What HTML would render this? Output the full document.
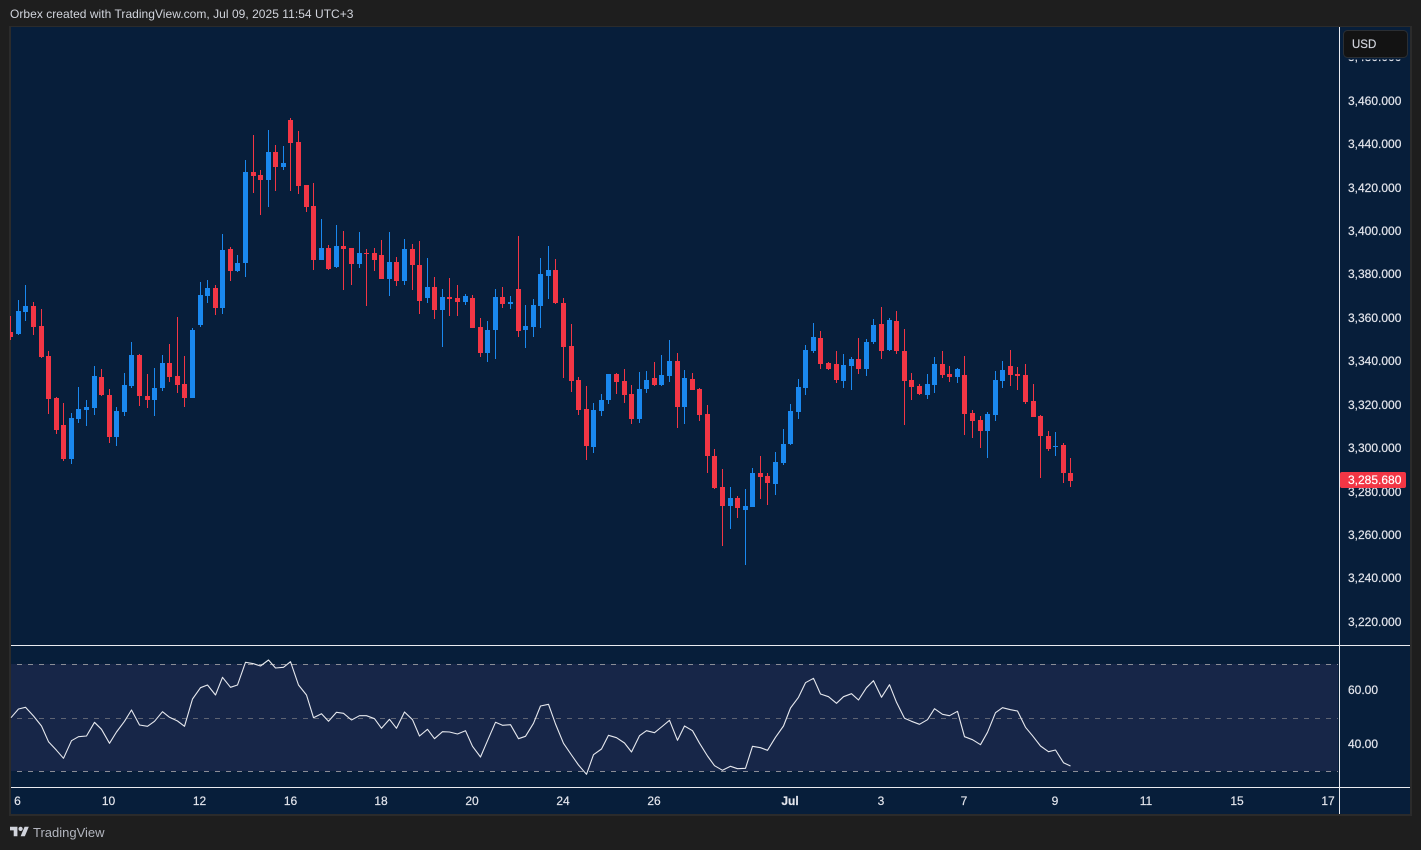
<!DOCTYPE html>
<html>
<head>
<meta charset="utf-8">
<title>Orbex chart</title>
<style>
html,body{margin:0;padding:0;background:#1e1e1e;width:1421px;height:850px;overflow:hidden}
svg{display:block;position:absolute;left:0;top:0}
text{font-family:"Liberation Sans",sans-serif;font-size:12px;fill:#e3e5ec;stroke:#e3e5ec;stroke-width:.18px}
</style>
</head>
<body>
<svg width="1421" height="850" viewBox="0 0 1421 850" xmlns="http://www.w3.org/2000/svg">
<rect width="1421" height="850" fill="#1e1e1e"/>
<text x="10" y="18" style="fill:#d1d4dc;stroke:none;letter-spacing:.035px">Orbex created with TradingView.com, Jul 09, 2025 11:54 UTC+3</text>

<!-- frame -->
<rect x="9" y="26" width="1403" height="790" fill="#2b2b2b"/>
<rect x="11" y="27" width="1399" height="787" fill="#071e3a"/>

<!-- RSI band -->
<rect x="11" y="664" width="1327" height="107" fill="#172648"/>
<g stroke="#8a8d96" stroke-width="1" stroke-dasharray="5 6" fill="none">
<path d="M17 664.5H1338"/>
<path d="M17 718.5H1338" stroke="#5f6473"/>
<path d="M17 771.5H1338"/>
</g>

<!-- wicks -->
<g fill="none" stroke-width="1" shape-rendering="crispEdges">
<path stroke="#f23645" d="M10.5 316V340M33.5 302V335M41.5 309V358M48.5 351V414M56.5 397V434M63.5 403V461M101.5 369V396M109.5 389V443M139.5 354V406M147.5 374V408M169.5 344V382M177.5 317V393M184.5 356V407M215.5 285V315M230.5 247V281M253.5 135V193M260.5 170V215M275.5 145V191M290.5 118V191M298.5 131V194M306.5 185V212M313.5 183V270M328.5 245V270M343.5 231V290M351.5 248V285M366.5 249V306M374.5 248V271M381.5 240V279M396.5 257V286M412.5 244V290M419.5 241V314M434.5 277V319M449.5 278V316M457.5 285V316M472.5 295V328M480.5 318V357M502.5 287V308M518.5 236V337M555.5 259V304M563.5 298V378M571.5 324V392M578.5 377V415M586.5 386V460M616.5 373V394M624.5 369V403M631.5 385V424M654.5 362V386M677.5 353V428M692.5 373V390M699.5 388V421M707.5 405V473M714.5 449V489M722.5 469V546M737.5 496V518M760.5 456V499M767.5 473V505M820.5 331V369M828.5 362V370M836.5 351V383M858.5 338V374M881.5 307V359M896.5 311V354M904.5 329V425M911.5 373V400M919.5 384V395M942.5 351V378M949.5 366V382M964.5 356V435M972.5 410V438M980.5 416V448M1010.5 350V386M1017.5 367V390M1025.5 364V404M1033.5 384V417M1040.5 415V478M1048.5 431V451M1063.5 443V483M1070.5 458V487"/>
<path stroke="#1a88ee" d="M18.5 300V335M25.5 285V321M71.5 413V464M78.5 387V423M86.5 400V426M94.5 366V415M116.5 407V446M124.5 373V416M131.5 342V388M154.5 368V416M162.5 355V391M192.5 328V398M200.5 282V327M207.5 280V303M222.5 234V314M237.5 255V272M245.5 160V277M268.5 130V207M283.5 146V170M321.5 219V260M336.5 225V268M359.5 232V268M389.5 232V296M404.5 239V285M427.5 258V303M442.5 289V347M465.5 294V305M487.5 321V362M495.5 289V359M510.5 296V309M525.5 305V348M533.5 299V337M540.5 258V328M548.5 246V299M593.5 403V453M601.5 394V416M608.5 374V404M639.5 372V423M646.5 371V393M661.5 355V386M669.5 340V382M684.5 370V424M730.5 487V529M745.5 489V565M752.5 468V507M775.5 452V495M783.5 429V465M790.5 404V445M798.5 379V419M805.5 345V395M813.5 323V353M843.5 354V388M851.5 357V390M866.5 339V376M873.5 319V344M889.5 318V351M927.5 374V399M934.5 357V393M957.5 368V383M987.5 412V458M995.5 371V421M1002.5 361V388M1055.5 432V456"/>
</g>
<!-- bodies -->
<g fill="none" stroke-width="5" shape-rendering="crispEdges">
<path stroke="#f23645" d="M33.5 306V327M41.5 326V357M48.5 356V399M56.5 398V430M63.5 425V459M101.5 377V395M109.5 395V437M139.5 355V396M147.5 396V400M169.5 363V377M177.5 376V385M184.5 384V398M215.5 288V308M230.5 249V271M253.5 172V176M260.5 175V180M275.5 152V167M290.5 120V143M298.5 142V186M306.5 185V207M313.5 206V260M328.5 248V269M343.5 246V249M351.5 248V264M366.5 253V254M374.5 253V260M381.5 255V279M396.5 262V281M412.5 249V265M419.5 265V301M434.5 287V310M449.5 297V299M457.5 298V302M472.5 298V328M480.5 327V353M502.5 297V304M518.5 289V331M555.5 270V303M563.5 303V347M571.5 346V381M578.5 380V410M586.5 409V446M616.5 374V382M624.5 381V395M631.5 394V419M654.5 378V385M677.5 361V407M692.5 379V390M699.5 389V415M707.5 414V456M714.5 456V488M722.5 487V506M737.5 498V508M760.5 473V477M767.5 476V483M820.5 338V364M828.5 363V369M836.5 364V380M858.5 359V369M881.5 324V351M896.5 321V351M904.5 351V381M911.5 380V387M919.5 386V394M942.5 364V375M949.5 374V377M964.5 375V414M972.5 413V421M980.5 420V431M1010.5 366V375M1017.5 374V376M1025.5 375V402M1033.5 401V417M1040.5 416V436M1048.5 436V449M1063.5 445V473M1070.5 473V481"/>
<path stroke="#1a88ee" d="M18.5 311V334M25.5 306V312M71.5 418V459M78.5 409V419M86.5 407V410M94.5 376V408M116.5 411V437M124.5 385V412M131.5 355V386M154.5 388V400M162.5 363V388M192.5 330V398M200.5 295V325M207.5 288V296M222.5 250V308M237.5 263V271M245.5 172V263M268.5 152V180M283.5 163V167M321.5 248V260M336.5 246V267M359.5 253V264M389.5 262V279M404.5 249V281M427.5 287V298M442.5 297V310M465.5 296V302M487.5 330V353M495.5 297V330M510.5 302V304M525.5 326V330M533.5 305V327M540.5 274V306M548.5 270V276M593.5 410V447M601.5 400V411M608.5 374V400M639.5 389V419M646.5 380V389M661.5 375V385M669.5 361V376M684.5 378V407M730.5 498V506M745.5 506V510M752.5 473V507M775.5 462V484M783.5 444V463M790.5 411V444M798.5 387V412M805.5 350V388M813.5 337V351M843.5 365V381M851.5 359V366M866.5 342V369M873.5 325V342M889.5 320V350M927.5 384V395M934.5 364V385M957.5 369V377M987.5 414V431M995.5 380V415M1002.5 370V381M1055.5 446V447"/>
</g>
<rect x="11" y="332" width="2" height="5" fill="#f23645"/>

<!-- RSI line -->
<polyline fill="none" stroke="#e6e8ee" stroke-width="1.1" stroke-linejoin="round" points="11,717.7 18.5,709 25.5,707.3 33.5,716 41.5,726 48.5,741.7 56.5,750.3 63.5,758.3 71.5,740.7 78.5,736.7 86.5,736 94.5,722.3 101.5,729.3 109.5,743.3 116.5,732 124.5,721.3 131.5,710 139.5,725 147.5,726.3 154.5,721.3 162.5,711.7 169.5,717.3 177.5,721 184.5,726.3 192.5,699 200.5,687.7 207.5,685 215.5,695 222.5,677.3 230.5,687.3 237.5,685 245.5,662.3 253.5,663.7 260.5,666 268.5,660 275.5,668 283.5,667.3 290.5,661.7 298.5,685 306.5,695 313.5,717.7 321.5,713.7 328.5,721.3 336.5,712.3 343.5,713.3 351.5,720 359.5,715.7 366.5,715.7 374.5,718.7 381.5,728.3 389.5,719.3 396.5,728.3 404.5,712 412.5,719.7 419.5,736 427.5,729.3 434.5,738.7 442.5,731.7 449.5,732 457.5,734 465.5,730.7 472.5,746.3 480.5,757 487.5,740.7 495.5,722.3 502.5,725.3 510.5,724.7 518.5,738.7 525.5,736.3 533.5,723.3 540.5,706 548.5,704.3 555.5,724 563.5,743.3 571.5,755 578.5,765 586.5,774.3 593.5,754.7 601.5,749 608.5,735.3 616.5,737.7 624.5,743 631.5,752 639.5,735.7 646.5,730.7 654.5,732.7 661.5,727 669.5,720.3 677.5,740.3 684.5,726 692.5,730.7 699.5,743.2 707.5,756 714.5,765.7 722.5,770.3 730.5,766.3 737.5,768.7 745.5,768.3 752.5,746.3 760.5,747.7 767.5,750.3 775.5,737.3 783.5,726 790.5,708 798.5,697.3 805.5,682.7 813.5,678.3 820.5,694 828.5,696.7 836.5,703.3 843.5,696.7 851.5,693.7 858.5,700 866.5,687.7 873.5,680.7 881.5,697.3 889.5,684.7 896.5,702.3 904.5,718.3 911.5,721.3 919.5,724.3 927.5,719.7 934.5,708.7 942.5,714.3 949.5,715.7 957.5,711.3 964.5,736.7 972.5,739.7 980.5,744.7 987.5,732.3 995.5,712.7 1002.5,707.7 1010.5,709.7 1017.5,711 1025.5,727.3 1032.5,735.7 1040.5,746 1048.5,751.7 1055.5,750 1063.5,762.7 1070.5,766"/>

<!-- separators -->
<g shape-rendering="crispEdges" fill="#e9ebf0">
<rect x="11" y="645" width="1399" height="1"/>
<rect x="11" y="787" width="1399" height="1"/>
<rect x="1339" y="27" width="1" height="787"/>
</g>

<!-- price labels -->
<text x="1348" y="61">3,480.000</text>
<text x="1348" y="105">3,460.000</text>
<text x="1348" y="148">3,440.000</text>
<text x="1348" y="192">3,420.000</text>
<text x="1348" y="235">3,400.000</text>
<text x="1348" y="278">3,380.000</text>
<text x="1348" y="322">3,360.000</text>
<text x="1348" y="365">3,340.000</text>
<text x="1348" y="409">3,320.000</text>
<text x="1348" y="452">3,300.000</text>
<text x="1348" y="496">3,280.000</text>
<text x="1348" y="539">3,260.000</text>
<text x="1348" y="582">3,240.000</text>
<text x="1348" y="626">3,220.000</text>
<text x="1348" y="694">60.00</text>
<text x="1348" y="748">40.00</text>

<!-- last price tag -->
<rect x="1340" y="472" width="66" height="16" rx="2" fill="#f23645"/>
<text x="1348" y="484" style="fill:#fff;stroke:#fff">3,285.680</text>

<!-- USD button -->
<rect x="1342" y="57" width="68" height="2.500" fill="#071e3a"/>
<rect x="1343.5" y="30.5" width="64" height="27" rx="4" fill="#131313" stroke="#2a2e33"/>
<text x="1352" y="48" style="font-size:11.5px;fill:#d1d4dc;stroke:#d1d4dc">USD</text>

<!-- time axis -->
<g text-anchor="middle">
<text x="17.5" y="805">6</text>
<text x="108.5" y="805">10</text>
<text x="199.5" y="805">12</text>
<text x="290.5" y="805">16</text>
<text x="381" y="805">18</text>
<text x="472" y="805">20</text>
<text x="563" y="805">24</text>
<text x="654" y="805">26</text>
<text x="790" y="805" style="font-weight:bold">Jul</text>
<text x="881" y="805">3</text>
<text x="964" y="805">7</text>
<text x="1055" y="805">9</text>
<text x="1146" y="805">11</text>
<text x="1237" y="805">15</text>
<text x="1328" y="805">17</text>
</g>

<!-- logo -->
<g transform="translate(10 824.6) scale(.53)" fill="#d1d4dc">
<path d="M14 22H7V11H0V4h14v18zM28 22h-8l7.500-18h8L28 22z"/>
<circle cx="20" cy="8" r="4"/>
</g>
<text x="33" y="837" style="font-size:13px;fill:#b2b5be;stroke:none">TradingView</text>
</svg>
</body>
</html>
